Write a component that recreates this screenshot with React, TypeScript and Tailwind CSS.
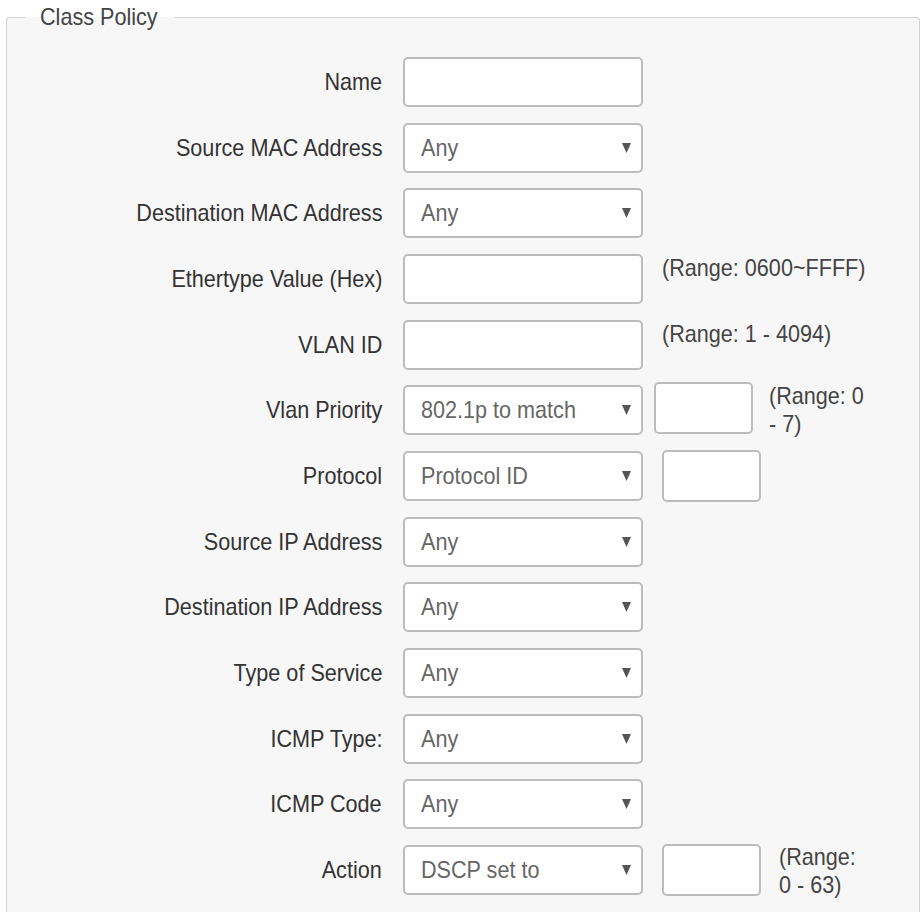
import type { ReactNode } from 'react'

// Rows of the class policy form
type Row = {
  label: string
  kind: 'input' | 'select'
  value?: string
  extra?: 'ethertype' | 'vlan' | 'priority' | 'protocol' | 'action'
}

const rows: Row[] = [
  { label: 'Name', kind: 'input' },
  { label: 'Source MAC Address', kind: 'select', value: 'Any' },
  { label: 'Destination MAC Address', kind: 'select', value: 'Any' },
  { label: 'Ethertype Value (Hex)', kind: 'input', extra: 'ethertype' },
  { label: 'VLAN ID', kind: 'input', extra: 'vlan' },
  { label: 'Vlan Priority', kind: 'select', value: '802.1p to match', extra: 'priority' },
  { label: 'Protocol', kind: 'select', value: 'Protocol ID', extra: 'protocol' },
  { label: 'Source IP Address', kind: 'select', value: 'Any' },
  { label: 'Destination IP Address', kind: 'select', value: 'Any' },
  { label: 'Type of Service', kind: 'select', value: 'Any' },
  { label: 'ICMP Type:', kind: 'select', value: 'Any' },
  { label: 'ICMP Code', kind: 'select', value: 'Any' },
  { label: 'Action', kind: 'select', value: 'DSCP set to', extra: 'action' },
]

// the screenshot is a bit narrow, so text is squeezed horizontally
function Txt({ children, right }: { children: ReactNode; right?: boolean }) {
  return (
    <span className={`inline-block scale-x-[0.9] whitespace-nowrap ${right ? 'origin-right' : 'origin-left'}`}>
      {children}
    </span>
  )
}

function Caret() {
  return (
    <svg width="9" height="10" viewBox="0 0 9 10" className="shrink-0">
      <polygon points="0,0 9,0 4.5,10" fill="#555" />
    </svg>
  )
}

function SmallBox({ className }: { className: string }) {
  return (
    <div
      className={`w-[99px] h-[52px] shrink-0 rounded-[5px] border-2 border-[#bcbcbc] bg-white ${className}`}
    />
  )
}

function Range({ lines, className }: { lines: string[]; className: string }) {
  return (
    <div className={`self-start text-[#444] ${className}`}>
      {lines.map((l) => (
        <div key={l}>
          <Txt>{l}</Txt>
        </div>
      ))}
    </div>
  )
}

function Extra({ kind }: { kind?: Row['extra'] }) {
  if (kind === 'ethertype') return <Range lines={['(Range: 0600~FFFF)']} className="ml-[19px] leading-[28px]" />
  if (kind === 'vlan') return <Range lines={['(Range: 1 - 4094)']} className="ml-[19px] leading-[28px]" />
  if (kind === 'priority')
    return (
      <>
        <SmallBox className="ml-[11px] self-start -mt-[3px]" />
        <Range lines={['(Range: 0', '- 7)']} className="ml-[16px] leading-[28px] -mt-[3px]" />
      </>
    )
  if (kind === 'protocol') return <SmallBox className="ml-[19px]" />
  if (kind === 'action')
    return (
      <>
        <SmallBox className="ml-[19px]" />
        <Range lines={['(Range:', '0 - 63)']} className="ml-[18px] leading-[28px] -mt-[2px]" />
      </>
    )
  return null
}

export default function App() {
  return (
    <div
      className="min-h-[912px] bg-white pl-[6px] pr-[3px] pt-[3px] text-[24px]"
      style={{ fontFamily: '"Liberation Sans", Arial, sans-serif' }}
    >
      <fieldset className="min-h-[909px] rounded-t-[4px] border border-b-0 border-[#d2d2d2] bg-[#f7f7f7]">
        <legend className="ml-[18px] pl-[15px] pr-[4px] leading-[28px] text-[#444]">
          <Txt>Class Policy</Txt>
        </legend>

        <div className="flex flex-col gap-[15.67px] pt-[26px]">
          {rows.map((row) => (
            <div key={row.label} className="flex h-[50px] items-center">
              <div className="w-[375px] shrink-0 text-right text-[#333]">
                <Txt right>{row.label}</Txt>
              </div>
              <div className="ml-[21px] flex h-[50px] w-[240px] shrink-0 items-center justify-between rounded-[5px] border-2 border-[#bcbcbc] bg-white pl-[16px] pr-[10px]">
                {row.kind === 'select' && (
                  <>
                    <span className="text-[#666]">
                      <Txt>{row.value}</Txt>
                    </span>
                    <Caret />
                  </>
                )}
              </div>
              <Extra kind={row.extra} />
            </div>
          ))}
        </div>
      </fieldset>
    </div>
  )
}
